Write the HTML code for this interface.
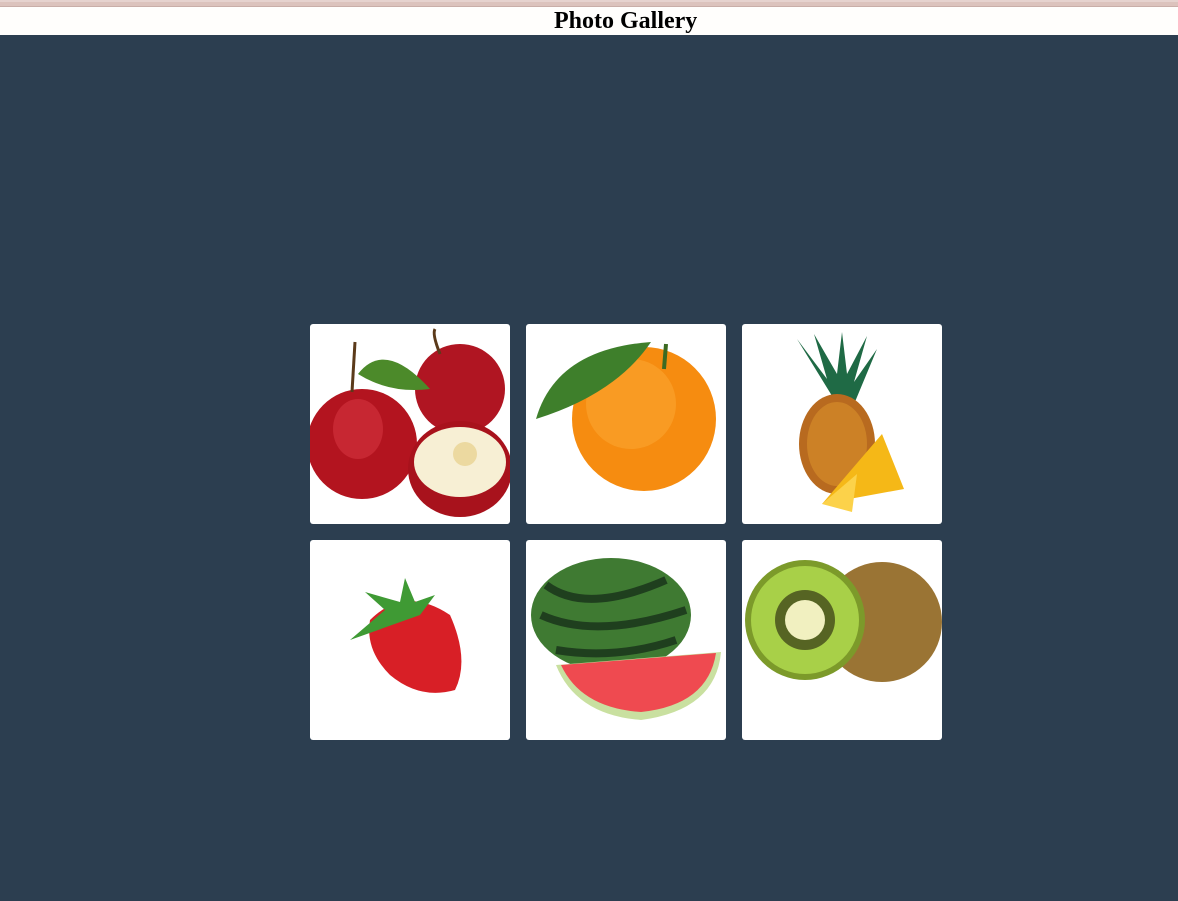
<!DOCTYPE html>
<html><head><meta charset="utf-8"><style>
html,body{margin:0;padding:0;width:1178px;height:901px;background:#2c3e50;overflow:hidden}
.top{position:absolute;left:0;top:0;width:1178px;height:2px;background:#e6d3cf}
.top2{position:absolute;left:0;top:2px;width:1178px;height:4px;background:#dcc3bd;border-bottom:1px solid #c9aea8}
.hdr{position:absolute;left:0;top:7px;width:1178px;height:28px;background:#fffefc;font:bold 24px "Liberation Serif",serif;line-height:28px;color:#000}
.hdr span{position:absolute;left:554px;top:0;white-space:nowrap}
.t{position:absolute;width:200px;height:200px;background:#fff;border-radius:3px;overflow:hidden}
svg{display:block}
</style></head><body>
<div class="top"></div><div class="top2"></div>
<div class="hdr"><span>Photo Gallery</span></div>

<div class="t" style="left:310px;top:324px"><svg width="200" height="200">
<circle cx="150" cy="65" r="45" fill="#b01522"/><circle cx="52" cy="120" r="55" fill="#b3141f"/><ellipse cx="48" cy="105" rx="25" ry="30" fill="#d43340" opacity=".6"/>
<ellipse cx="150" cy="145" rx="52" ry="48" fill="#a8121c"/><ellipse cx="150" cy="138" rx="46" ry="35" fill="#f7efd4"/><circle cx="155" cy="130" r="12" fill="#ecd9a0"/>
<path d="M48 50 Q75 15 120 65 Q80 70 48 50Z" fill="#4c8a2a"/><path d="M42 68 L45 18" stroke="#5b3a1a" stroke-width="3"/><path d="M130 30 Q122 10 125 5" stroke="#5b3a1a" stroke-width="3" fill="none"/>
</svg></div>

<div class="t" style="left:526px;top:324px"><svg width="200" height="200">
<circle cx="118" cy="95" r="72" fill="#f68c10"/><circle cx="105" cy="80" r="45" fill="#fba530" opacity=".6"/>
<path d="M10 95 Q30 25 125 18 Q90 70 10 95Z" fill="#3e7f2b"/><path d="M140 20 L138 45" stroke="#3c6a22" stroke-width="4"/>
</svg></div>

<div class="t" style="left:742px;top:324px"><svg width="200" height="200">
<path d="M95 80 L55 15 L85 55 L72 10 L95 50 L100 8 L105 50 L125 12 L112 58 L135 25 L110 85Z" fill="#1f6a45"/>
<ellipse cx="95" cy="120" rx="38" ry="50" fill="#b86a1f"/><ellipse cx="95" cy="120" rx="30" ry="42" fill="#d9912c" opacity=".6"/>
<path d="M80 180 L140 110 L162 165 Z" fill="#f5b817"/><path d="M110 188 L80 180 L115 150Z" fill="#fcd24a"/>
</svg></div>

<div class="t" style="left:310px;top:540px"><svg width="200" height="200">
<path d="M60 80 Q95 45 140 75 Q160 120 145 150 Q110 160 80 135 Q55 110 60 80Z" fill="#d81f26"/>
<path d="M40 100 L75 70 L55 52 L90 62 L95 38 L105 62 L125 55 L110 75Z" fill="#3f9a34"/>
</svg></div>

<div class="t" style="left:526px;top:540px"><svg width="200" height="200">
<ellipse cx="85" cy="75" rx="80" ry="57" fill="#3f7a32"/>
<path d="M20 45 Q60 75 140 40 M15 75 Q70 100 160 70 M30 110 Q90 120 150 100" stroke="#1f3f1e" stroke-width="8" fill="none"/>
<path d="M30 125 L195 112 Q190 170 115 180 Q50 175 30 125Z" fill="#c9e0a0"/>
<path d="M35 125 L190 113 Q182 165 115 172 Q55 168 35 125Z" fill="#ef4a50"/>
</svg></div>

<div class="t" style="left:742px;top:540px"><svg width="200" height="200">
<ellipse cx="140" cy="82" rx="60" ry="60" fill="#9a7434"/>
<circle cx="63" cy="80" r="60" fill="#7c9a2a"/><circle cx="63" cy="80" r="54" fill="#a8d048"/>
<circle cx="63" cy="80" r="30" fill="#2a2a10" opacity=".65"/><circle cx="63" cy="80" r="20" fill="#f1f0c0"/>
</svg></div>
</body></html>
